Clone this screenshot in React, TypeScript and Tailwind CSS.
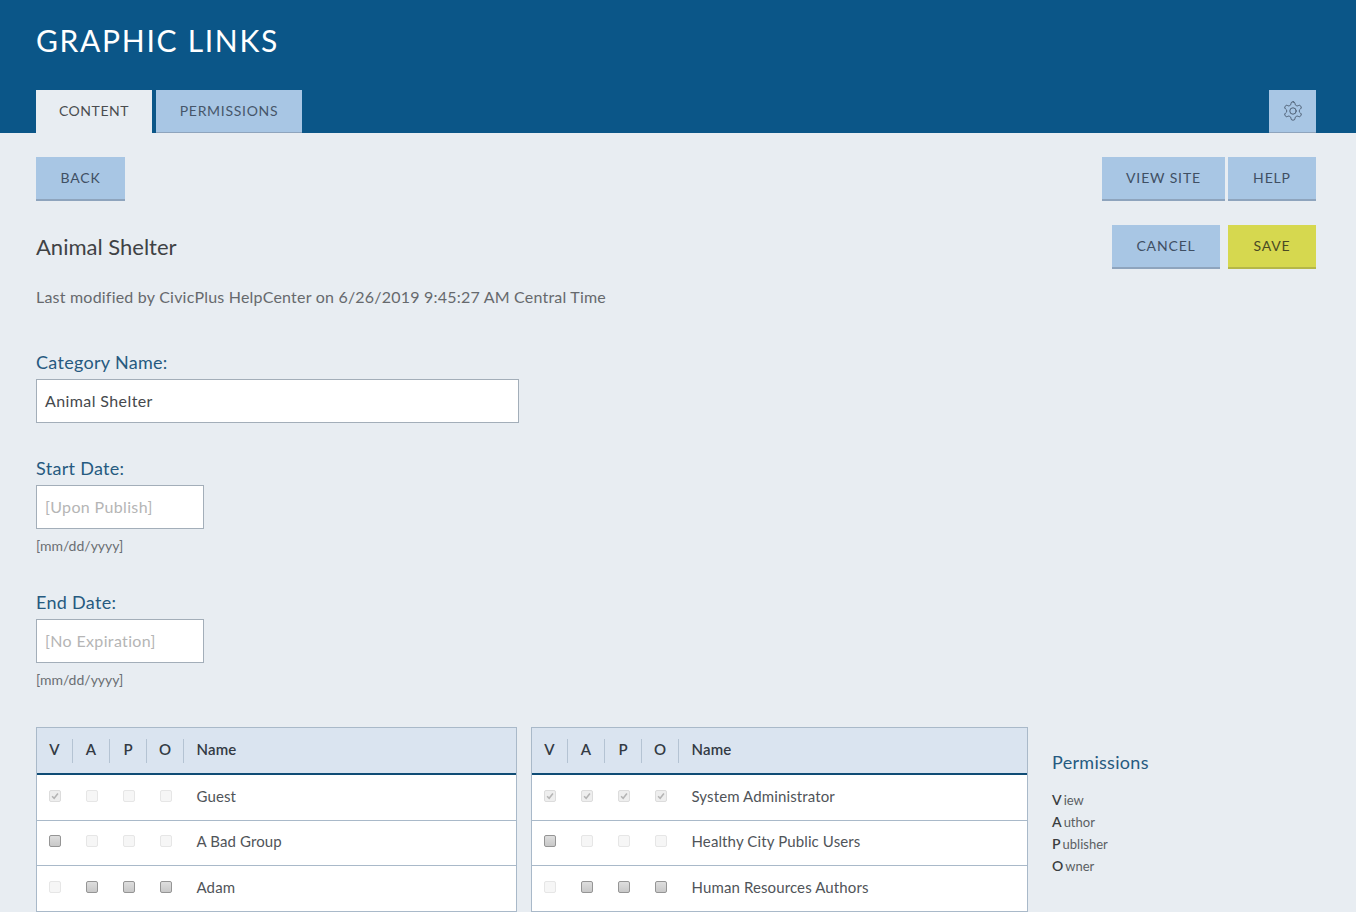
import React from "react";

function Btn({ children, className = "" }: { children: React.ReactNode; className?: string }) {
  return (
    <button className={`h-[44px] pb-[2px] bg-[#a8c6e4] border-b-2 border-[#8ea4bd] text-[#3f4f63] text-[14px] tracking-[0.85px] uppercase text-center ${className}`}>
      {children}
    </button>
  );
}

type Box = "on" | "off" | "dis" | "dison";

function Check({ s }: { s: Box }) {
  if (s === "off")
    return <span className="block w-[12px] h-[12px] rounded-[2px] border border-[#959595] bg-gradient-to-b from-[#dedede] to-[#c8c8c8]" />;
  if (s === "dis")
    return <span className="block w-[12px] h-[12px] rounded-[2px] border border-[#e6e6e6] bg-[#f6f6f6]" />;
  return (
    <span className="flex items-center justify-center w-[12px] h-[12px] rounded-[2px] border border-[#dcdcdc] bg-[#eeeeee]">
      <svg viewBox="0 0 12 12" className="w-[10px] h-[10px]">
        <path d="M2.5 6.2 L5 8.8 L9.5 3" fill="none" stroke="#b4b4b4" strokeWidth="1.8" />
      </svg>
    </span>
  );
}

function Table({ rows, className = "" }: { rows: { c: Box[]; name: string }[]; className?: string }) {
  return (
    <div className={`border border-[#a9b9c9] border-b-0 bg-white ${className}`}>
      <div className="h-[47px] bg-[#dae4f0] border-b-2 border-[#0f4c75] flex items-center text-[15px] text-[#333a44] font-semibold">
        {["V", "A", "P", "O"].map((h) => (
          <div key={h} className="w-[37px] first:w-[36px] h-[24px] border-r border-[#b4c3d3] flex items-center justify-center pb-[3px]">
            {h}
          </div>
        ))}
        <div className="pl-[12.5px] pb-[3px] tracking-[0.15px]">Name</div>
      </div>
      {rows.map((r) => (
        <div key={r.name} className="flex items-center h-[45.5px] text-[15px] tracking-[0.12px] text-[#505459] border-[#a9b9c9] border-b">
          {r.c.map((c, j) => (
            <div key={j} className="w-[37px] first:w-[36px] flex justify-center pb-[3px]">
              <Check s={c} />
            </div>
          ))}
          <div className="pl-[12.5px] pb-[3px]">{r.name}</div>
        </div>
      ))}
    </div>
  );
}

function Field({ label, value }: { label: string; value: string }) {
  return (
    <div>
      <div className="text-[18px] leading-[22px] tracking-[0.3px] text-[#265a80] mb-[6px]">{label}</div>
      <div className="h-[44px] w-[168px] bg-white border border-[#a3aeb9] flex items-center pl-[8px] text-[16px] tracking-[0.35px] text-[#b5b5b5]">
        {value}
      </div>
      <div className="text-[14px] leading-[20px] text-[#6b6f73] mt-[7px]">[mm/dd/yyyy]</div>
    </div>
  );
}

export default function App() {
  return (
    <div className="h-[912px] overflow-hidden bg-[#e8edf2] font-['Lato',sans-serif]">
      <header className="h-[133px] bg-[#0b5688] pl-[36px] pr-[40px] flex flex-col justify-between">
        <h1 className="text-[30px] leading-[36px] tracking-[1.7px] text-white pt-[22px] h-[58px] uppercase">Graphic Links</h1>
        <div className="flex items-end justify-between">
          <div className="flex gap-[4px]">
            <div className="w-[116px] h-[43px] pb-[2px] bg-[#e8edf2] text-[#4a4d50] text-[14px] tracking-[0.55px] flex items-center justify-center">CONTENT</div>
            <div className="w-[146px] h-[43px] pb-[2px] bg-[#a8c6e4] border-b border-[#8ea4bd] text-[#46566a] text-[14px] tracking-[0.7px] flex items-center justify-center">PERMISSIONS</div>
          </div>
          <div className="w-[47px] h-[43px] bg-[#a8c6e4] border-b border-[#8ea4bd] flex items-center justify-center">
            <svg viewBox="0 0 24 24" className="w-[22px] h-[22px]" fill="none" stroke="#46566a" strokeWidth="1" strokeLinecap="round" strokeLinejoin="round">
              <path d="M12.22 2h-.44a2 2 0 0 0-2 2v.18a2 2 0 0 1-1 1.73l-.43.25a2 2 0 0 1-2 0l-.15-.08a2 2 0 0 0-2.73.73l-.22.38a2 2 0 0 0 .73 2.73l.15.1a2 2 0 0 1 1 1.72v.51a2 2 0 0 1-1 1.74l-.15.09a2 2 0 0 0-.73 2.73l.22.38a2 2 0 0 0 2.73.73l.15-.08a2 2 0 0 1 2 0l.43.25a2 2 0 0 1 1 1.73V20a2 2 0 0 0 2 2h.44a2 2 0 0 0 2-2v-.18a2 2 0 0 1 1-1.73l.43-.25a2 2 0 0 1 2 0l.15.08a2 2 0 0 0 2.73-.73l.22-.39a2 2 0 0 0-.73-2.73l-.15-.08a2 2 0 0 1-1-1.74v-.5a2 2 0 0 1 1-1.74l.15-.09a2 2 0 0 0 .73-2.73l-.22-.38a2 2 0 0 0-2.73-.73l-.15.08a2 2 0 0 1-2 0l-.43-.25a2 2 0 0 1-1-1.73V4a2 2 0 0 0-2-2z" />
              <circle cx="12" cy="12" r="3.5" />
            </svg>
          </div>
        </div>
      </header>

      <main className="pr-[40px] pl-[36px] pt-[24px]">
        <div className="flex justify-between">
          <Btn className="w-[89px]">Back</Btn>
          <div className="flex gap-[3px]">
            <Btn className="w-[123px]">View Site</Btn>
            <Btn className="w-[88px]">Help</Btn>
          </div>
        </div>

        <div className="flex justify-between mt-[24px]">
          <div>
            <div className="text-[22px] leading-[30px] text-[#3f4245] pt-[7px]">Animal Shelter</div>
            <div className="text-[16px] leading-[22px] tracking-[0.21px] text-[#66696d] mt-[24px]">Last modified by CivicPlus HelpCenter on 6/26/2019 9:45:27 AM Central Time</div>
          </div>
          <div className="flex gap-[8px]">
            <Btn className="w-[108px]">Cancel</Btn>
            <Btn className="w-[88px] bg-[#d6d84f] border-[#b5b748] !text-[#4a4a24]">Save</Btn>
          </div>
        </div>

        <div className="mt-[43px]">
          <div className="text-[18px] leading-[22px] tracking-[0.3px] text-[#265a80] mb-[6px]">Category Name:</div>
          <div className="h-[44px] w-[483px] bg-white border border-[#a3aeb9] flex items-center pl-[8px] text-[16px] tracking-[0.4px] text-[#45494d]">Animal Shelter</div>
        </div>

        <div className="mt-[34px]">
          <Field label="Start Date:" value="[Upon Publish]" />
        </div>
        <div className="mt-[35px]">
          <Field label="End Date:" value="[No Expiration]" />
        </div>

        <div className="flex mt-[37px]">
          <Table
            className="w-[481px]"
            rows={[
              { c: ["dison", "dis", "dis", "dis"], name: "Guest" },
              { c: ["off", "dis", "dis", "dis"], name: "A Bad Group" },
              { c: ["dis", "off", "off", "off"], name: "Adam" },
            ]}
          />
          <Table
            className="w-[497px] ml-[14px]"
            rows={[
              { c: ["dison", "dison", "dison", "dison"], name: "System Administrator" },
              { c: ["off", "dis", "dis", "dis"], name: "Healthy City Public Users" },
              { c: ["dis", "off", "off", "off"], name: "Human Resources Authors" },
            ]}
          />
          <div className="ml-[24px] pt-[22px]">
            <div className="text-[18px] leading-[26px] tracking-[0.3px] text-[#265a80]">Permissions</div>
            <div className="mt-[14px] text-[13px] leading-[22px] text-[#5b5f63]">
              {[["V", "iew"], ["A", "uthor"], ["P", "ublisher"], ["O", "wner"]].map(([a, b]) => (
                <div key={a}><span className="text-[14px] font-semibold text-[#3a3d40] mr-[2px]">{a}</span>{b}</div>
              ))}
            </div>
          </div>
        </div>
      </main>
    </div>
  );
}
